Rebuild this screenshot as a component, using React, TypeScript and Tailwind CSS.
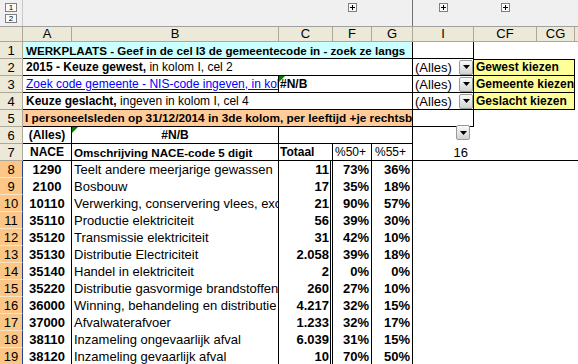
import React from "react";

const G = "grid grid-cols-[23px_49px_207px_54px_39px_41px_61px_63px_38px_1fr]";
const CELL = "h-full min-w-0 overflow-hidden whitespace-nowrap flex items-center leading-[15px]";

function DropBtn() {
  return (
    <div className="w-[14px] h-[15px] shrink-0 rounded-[2px] border border-[#9a9a9a] bg-linear-to-b from-[#fbfbfb] to-[#d2d2d2] flex items-center justify-center">
      <svg width="7" height="4" viewBox="0 0 7 4">
        <polygon points="0,0 7,0 3.5,4" fill="#000" />
      </svg>
    </div>
  );
}

function ErrTri() {
  return (
    <svg className="absolute left-0 top-0" width="6" height="6" viewBox="0 0 6 6">
      <polygon points="0,0 6,0 0,6" fill="#008000" />
    </svg>
  );
}

function PlusBox() {
  return (
    <div className="w-[9px] h-[9px] border border-[#808080] bg-[#fafafa] flex items-center justify-center">
      <svg width="5" height="5" viewBox="0 0 5 5">
        <rect x="0" y="2" width="5" height="1" fill="#000" />
        <rect x="2" y="0" width="1" height="5" fill="#000" />
      </svg>
    </div>
  );
}

function RH({ n }: { n: number }) {
  return (
    <div className="h-full flex items-center justify-center bg-[#ece9d8] border-r border-b border-[#aca899] text-[13px] leading-[15px]">
      {n}
    </div>
  );
}

function RHSel({ n }: { n: number }) {
  return (
    <div className="h-full flex items-center justify-center bg-[#fbc686] border-r border-r-[#21408f] border-b border-b-[#fde4c2] text-[13px] leading-[15px]">
      {n}
    </div>
  );
}

const data: [string, string, string, string, string][] = [
  ["1290", "Teelt andere meerjarige gewassen", "11", "73%", "36%"],
  ["2100", "Bosbouw", "17", "35%", "18%"],
  ["10110", "Verwerking, conservering vlees, exclusief vleesproducten", "21", "90%", "57%"],
  ["35110", "Productie elektriciteit", "56", "39%", "30%"],
  ["35120", "Transmissie elektriciteit", "31", "42%", "10%"],
  ["35130", "Distributie Electriciteit", "2.058", "39%", "18%"],
  ["35140", "Handel in elektriciteit", "2", "0%", "0%"],
  ["35220", "Distributie gasvormige brandstoffen via leidingen", "260", "27%", "10%"],
  ["36000", "Winning, behandeling en distributie water", "4.217", "32%", "15%"],
  ["37000", "Afvalwaterafvoer", "1.233", "32%", "17%"],
  ["38110", "Inzameling ongevaarlijk afval", "6.039", "31%", "15%"],
  ["38120", "Inzameling gevaarlijk afval", "10", "70%", "50%"],
];

export default function App() {
  const cols = ["A", "B", "C", "F", "G", "I", "CF", "CG"];
  return (
    <div className="w-[578px] h-[364px] overflow-hidden bg-white text-black font-['Liberation_Sans',Arial,sans-serif]">
      {/* outline bar */}
      <div className={`${G} h-[27px] bg-[#f0f0f0] border-b border-[#a0a0a0]`}>
        <div className="h-full border-r border-[#c8c8c8] flex flex-col gap-[2px] pt-[3px] pl-[5px]">
          <div className="w-[12px] h-[9px] border border-[#808080] bg-[#fafafa] text-[8px] leading-[7px] text-center">1</div>
          <div className="w-[12px] h-[9px] border border-[#808080] bg-[#fafafa] text-[8px] leading-[7px] text-center">2</div>
        </div>
        <div />
        <div />
        <div />
        <div className="flex justify-center pt-[3px]"><PlusBox /></div>
        <div className="h-full border-r border-[#707070]" />
        <div className="flex justify-center pt-[3px]"><PlusBox /></div>
        <div className="flex justify-center pt-[3px]"><PlusBox /></div>
        <div />
        <div />
      </div>

      {/* column header */}
      <div className={`${G} h-[15px] bg-[#ece9d8] border-b border-[#aca899]`}>
        <div className="h-full border-r border-[#aca899]" />
        {cols.map((c) => (
          <div key={c} className="h-full border-r border-[#aca899] text-[13px] leading-[14px] text-center">
            {c}
          </div>
        ))}
        <div />
      </div>

      {/* row 1 */}
      <div className={`${G} h-[17px]`}>
        <RH n={1} />
        <div className={`${CELL} col-span-5 bg-[#ccffff] border-r border-b border-black text-[11.6px] font-bold pl-[3px]`}>
          WERKPLAATS - Geef in de cel I3 de gemeentecode in - zoek ze langs
        </div>
        <div className="h-full border-r border-b border-black" />
        <div className="col-span-2" />
        <div />
      </div>

      {/* row 2 */}
      <div className={`${G} h-[17px]`}>
        <RH n={2} />
        <div className={`${CELL} col-span-5 border-r border-b border-black text-[12px] pl-[3px]`}>
          <span className="font-bold">2015 - Keuze gewest,</span>&nbsp;in kolom I, cel 2
        </div>
        <div className={`${CELL} justify-between border-r border-b border-black text-[13px] pl-[2px]`}>
          <span>(Alles)</span>
          <DropBtn />
        </div>
        <div className={`${CELL} col-span-2 bg-[#ffff99] border-t border-r border-b border-black text-[12px] font-bold pl-[2px]`}>
          Gewest kiezen
        </div>
        <div />
      </div>

      {/* row 3 */}
      <div className={`${G} h-[17px]`}>
        <RH n={3} />
        <div className={`${CELL} col-span-2 border-r border-b border-black text-[12px] pl-[3px]`}>
          <span className="text-[#0000ff] underline">Zoek code gemeente - NIS-code ingeven, in kolom I, cel 3</span>
        </div>
        <div className={`${CELL} relative col-span-3 border-r border-b border-black text-[12px] font-bold pl-[1px]`}>
          <ErrTri />
          #N/B
        </div>
        <div className={`${CELL} justify-between border-r border-b border-black text-[13px] pl-[2px]`}>
          <span>(Alles)</span>
          <DropBtn />
        </div>
        <div className={`${CELL} col-span-2 bg-[#ffff99] border-r border-b border-black text-[12px] font-bold pl-[2px]`}>
          Gemeente kiezen
        </div>
        <div />
      </div>

      {/* row 4 */}
      <div className={`${G} h-[17px]`}>
        <RH n={4} />
        <div className={`${CELL} col-span-5 border-r border-b border-black text-[12px] pl-[3px]`}>
          <span className="font-bold">Keuze geslacht,</span>&nbsp;ingeven in kolom I, cel 4
        </div>
        <div className={`${CELL} justify-between border-r border-b border-black text-[13px] pl-[2px]`}>
          <span>(Alles)</span>
          <DropBtn />
        </div>
        <div className={`${CELL} col-span-2 bg-[#ffff99] border-r border-b border-black text-[12px] font-bold pl-[2px]`}>
          Geslacht kiezen
        </div>
        <div />
      </div>

      {/* row 5 */}
      <div className={`${G} h-[17px]`}>
        <RH n={5} />
        <div className={`${CELL} col-span-5 bg-[#ffcc99] border-r border-b border-black text-[11.8px] font-bold pl-[2px]`}>
          I personeelsleden op 31/12/2014 in 3de kolom, per leeftijd +je rechtsboven
        </div>
        <div className="h-full border-r border-b border-black" />
        <div className="col-span-2" />
        <div />
      </div>

      {/* row 6 */}
      <div className={`${G} h-[17px]`}>
        <RH n={6} />
        <div className={`${CELL} justify-center border-r border-b border-black text-[12px] font-bold`}>(Alles)</div>
        <div className={`${CELL} relative justify-center border-r border-b border-black text-[12px] font-bold`}>
          <ErrTri />
          #N/B
        </div>
        <div className="col-span-3 h-full border-r border-b border-black" />
        <div className="h-full flex justify-end items-start pr-[4px] -mt-[2px]">
          <DropBtn />
        </div>
        <div className="col-span-2" />
        <div />
      </div>

      {/* row 7 */}
      <div className={`${G} h-[17px]`}>
        <RH n={7} />
        <div className={`${CELL} justify-center border-r border-b border-black text-[12px] font-bold`}>NACE</div>
        <div className={`${CELL} border-r border-b border-black text-[11.6px] font-bold pl-[2px]`}>Omschrijving NACE-code 5 digit</div>
        <div className={`${CELL} border-r border-b border-black text-[12px] font-bold pl-[1px]`}>Totaal</div>
        <div className={`${CELL} border-r border-b border-black text-[12px] pl-[2px]`}>%50+</div>
        <div className={`${CELL} border-r border-b border-black text-[12px] pl-[3px]`}>%55+</div>
        <div className={`${CELL} justify-end border-b border-black text-[13px] pr-[6px]`}>16</div>
        <div className="h-full border-b border-black" />
        <div className="h-full border-b border-black" />
        <div className="h-full border-b border-black" />
      </div>

      {/* data rows */}
      {data.map((r, i) => (
        <div key={r[0]} className={`${G} h-[17px]`}>
          <RHSel n={i + 8} />
          <div className={`${CELL} justify-center border-r border-black text-[13px] font-bold`}>{r[0]}</div>
          <div className={`${CELL} border-r border-black text-[13px] pl-[2px]`}>{r[1]}</div>
          <div className={`${CELL} justify-end border-r-[3px] border-double border-black text-[13px] font-bold pr-[1px]`}>{r[2]}</div>
          <div className={`${CELL} justify-end border-r border-black text-[13px] font-bold pr-[2px]`}>{r[3]}</div>
          <div className={`${CELL} justify-end border-r border-black text-[13px] font-bold pr-[2px]`}>{r[4]}</div>
          <div />
          <div />
          <div />
          <div />
        </div>
      ))}
    </div>
  );
}
